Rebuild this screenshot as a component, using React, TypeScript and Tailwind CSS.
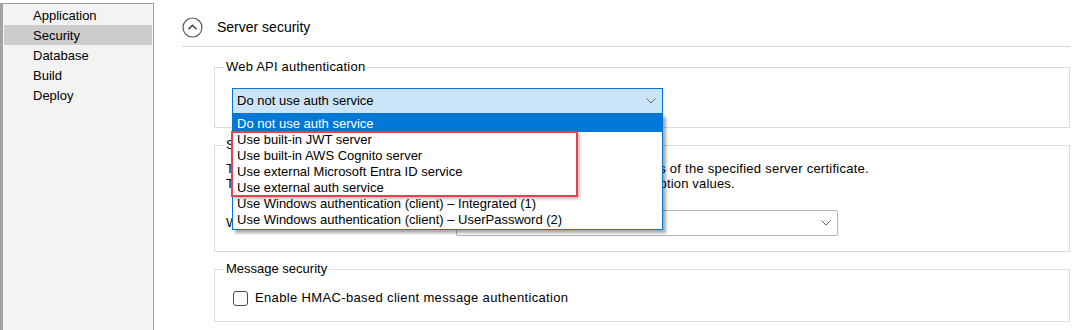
import React from 'react';

const NAV = ['Application', 'Security', 'Database', 'Build', 'Deploy'];

const OPTIONS = [
  'Do not use auth service',
  'Use built-in JWT server',
  'Use built-in AWS Cognito server',
  'Use external Microsoft Entra ID service',
  'Use external auth service',
  'Use Windows authentication (client) \u2013 Integrated (1)',
  'Use Windows authentication (client) \u2013 UserPassword (2)',
];

const Chevron: React.FC = () => (
  <svg width="10" height="6" viewBox="0 0 10 6" className="shrink-0">
    <path d="M0.5 0.5 L5 5 L9.5 0.5" stroke="#606060" strokeWidth="1" fill="none" />
  </svg>
);

const Sidebar: React.FC = () => (
  <aside className="w-[154px] shrink-0 mt-[3px] bg-[#f3f3f3] border-t border-r border-[#a0a0a0] border-l-[3px] border-l-[#a3a3a3] pt-[1px]">
    {NAV.map((item) => (
      <div
        key={item}
        className={`h-[20px] mx-[1px] pl-[29px] flex items-center leading-none ${item === 'Security' ? 'bg-[#cccccc]' : ''}`}
      >
        {item}
      </div>
    ))}
  </aside>
);

const App: React.FC = () => {
  return (
    <div className="w-[1078px] h-[330px] flex bg-white text-black text-[13px] font-['Liberation_Sans',Arial,sans-serif] overflow-hidden">
      <Sidebar />

      <main className="flex-1 flex flex-col">
        <div className="mt-[17px] ml-[28px] h-[20px] flex items-center gap-[14px]">
          <svg width="21" height="21" viewBox="0 0 21 21">
            <circle cx="10.5" cy="10.5" r="9.5" stroke="#5f5f5f" strokeWidth="1.2" fill="none" />
            <path d="M6.5 12.3 L10.5 8.3 L14.5 12.3" stroke="#3f3f3f" strokeWidth="1.5" fill="none" />
          </svg>
          <span className="text-[14px]">Server security</span>
        </div>
        <div className="mt-[9px] ml-[28px] mr-[8px] h-px bg-[#d4d4d4]" />

        {/* Web API authentication */}
        <fieldset className="mt-[12px] ml-[60px] mr-[8px] border border-[#dcdcdc] pl-[9px] pb-[13px]">
          <legend className="px-[2px] leading-[16px] tracking-[0.2px]">Web API authentication</legend>
          <div className="relative mt-[13px] ml-[8px] w-[431px] z-10">
            <div className="h-[26px] bg-[#cce4f7] border border-[#0078d7] pl-[4px] pr-[6px] flex items-center justify-between">
              <span>Do not use auth service</span>
              <Chevron />
            </div>
            <div className="absolute left-0 top-full w-[431px] bg-white border border-t-0 border-[#0078d7] pb-[1px] shadow-[3px_3px_3px_rgba(0,0,0,0.35)]">
              {OPTIONS.map((opt, idx) => (
                <div
                  key={opt}
                  className={`pl-[4px] flex items-center whitespace-nowrap ${idx === 0 ? 'h-[18px] pt-[2px] bg-[#0078d7] text-white' : 'h-[16px]'}`}
                >
                  {opt}
                </div>
              ))}
              <div className="absolute left-[-2px] top-[17px] w-[347px] h-[66px] border-2 border-[#e5424d] shadow-[2px_2px_3px_rgba(0,0,0,0.25)]" />
            </div>
          </div>
        </fieldset>

        {/* Server security options, partly covered by the open list */}
        <fieldset className="mt-[9px] ml-[60px] mr-[8px] border border-[#dcdcdc] pl-[9px] pb-[15px]">
          <legend className="px-[2px] leading-[16px]">Service message encryption</legend>
          <div className="mt-[8px] ml-[2px] leading-[15px] whitespace-nowrap">
            <p className="tracking-[0.25px]">The client encrypts messages and verifies responses with the public keys of the specified server certificate.</p>
            <p className="tracking-[0.18px]">The server decrypts messages with its private keys and returns the encryption values.</p>
          </div>
          <div className="mt-[19px] ml-[2px] flex items-center">
            <span className="w-[230px] shrink-0">Windows authentication mode:</span>
            <div className="w-[382px] h-[26px] bg-white border border-[#b4b4b4] rounded-[2px] pr-[6px] flex items-center justify-end">
              <Chevron />
            </div>
          </div>
        </fieldset>

        {/* Message security */}
        <fieldset className="mt-[9px] ml-[60px] mr-[8px] border border-[#dcdcdc] pl-[9px] pb-[15px]">
          <legend className="px-[2px] leading-[16px]">Message security</legend>
          <label className="mt-[13px] ml-[9px] h-[16px] flex items-center gap-[7px]">
            <span className="w-[15px] h-[15px] rounded-[3px] border border-[#4a4a4a] bg-[#fbfbfb]" />
            <span className="tracking-[0.35px]">Enable HMAC-based client message authentication</span>
          </label>
        </fieldset>
      </main>
    </div>
  );
};

export default App;
